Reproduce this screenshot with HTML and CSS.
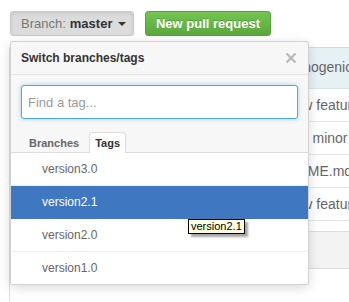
FILE: index.html
```html
<!DOCTYPE html>
<html lang="en">

<head>
    <meta charset="UTF-8">
    <meta name="viewport" content="width=device-width, initial-scale=1.0">
    <title>Switch branches/tags</title>
    <link rel="stylesheet" href="styles.css">
</head>

<body>
    <div class="page">
        <!-- Toolbar -->
        <div class="toolbar">
            <button class="btn btn-branch">
                <span class="btn-label">Branch:</span>
                <span class="btn-name">master</span>
                <span class="caret"></span>
            </button>
            <button class="btn btn-green">New pull request</button>
        </div>

        <!-- Commit list behind the menu -->
        <div class="commits">
            <div class="commit commit-head"><span class="msg">Hide pathogenic filter</span></div>
            <div class="commit"><span class="msg">Adds new feature list</span></div>
            <div class="commit"><span class="msg">Fixed <a href="#">#2</a>, minor cleanup</span></div>
            <div class="commit"><span class="msg">fix README.md</span></div>
            <div class="commit"><span class="msg">Adds new feature list</span></div>
            <div class="commit-foot"></div>
        </div>

        <!-- Branch / tag menu -->
        <div class="select-menu">
            <div class="menu-header">
                <span class="menu-title">Switch branches/tags</span>
                <svg class="menu-close" width="12" height="12" viewBox="0 0 12 12">
                    <path d="M1.5 1.5 L10.5 10.5 M10.5 1.5 L1.5 10.5" stroke="#b8b8b8" stroke-width="2.2" />
                </svg>
            </div>
            <div class="menu-filter">
                <input type="text" class="filter-input" placeholder="Find a tag...">
                <div class="menu-tabs">
                    <div class="menu-tab">Branches</div>
                    <div class="menu-tab active">Tags</div>
                </div>
            </div>
            <div class="menu-list">
                <div class="menu-item">version3.0</div>
                <div class="menu-item selected">version2.1</div>
                <div class="menu-item">version2.0</div>
                <div class="menu-item">version1.0</div>
            </div>
        </div>

        <div class="tooltip">version2.1</div>
    </div>
</body>

</html>
```

FILE: styles.css
```css
body {
    font-family: "Liberation Sans", Arial, sans-serif;
    margin: 0;
    padding: 0;
    background-color: white;
    color: #333;
    overflow: hidden;
}

.page {
    position: relative;
    padding: 11px 0 0 10px;
    height: 291px;
}

.toolbar {
    display: flex;
    gap: 11px;
}

.btn {
    height: 25px;
    padding: 0 10px;
    border-radius: 3px;
    font-family: inherit;
    font-size: 13px;
    line-height: 23px;
    white-space: nowrap;
    cursor: pointer;
}

.btn-branch {
    width: 124px;
    display: flex;
    align-items: center;
    gap: 4px;
    background-color: #dcdcdc;
    border: 1px solid #c8c8c8;
    box-shadow: inset 0 2px 4px rgba(0, 0, 0, 0.08);
}

.btn-label {
    color: #777;
}

.btn-name {
    font-weight: bold;
    color: #333;
}

.caret {
    width: 0;
    height: 0;
    margin-left: 2px;
    border-top: 4px solid #333;
    border-left: 4px solid transparent;
    border-right: 4px solid transparent;
}

.btn-green {
    width: 126px;
    padding: 0;
    text-align: center;
    color: white;
    font-weight: bold;
    text-shadow: 0 -1px 0 rgba(0, 0, 0, 0.2);
    background: linear-gradient(#74c551, #5aa83c);
    border: 1px solid #56a53a;
}

.commits {
    margin: 11px 0 0 -1px;
    border-left: 1px solid #ddd;
    height: 255px;
}

.commit {
    height: 32px;
    padding-left: 241px;
    border-bottom: 1px solid #e5e5e5;
    font-size: 14px;
    line-height: 32px;
    color: #666;
    white-space: nowrap;
    overflow: hidden;
}

.commit a {
    color: #4078c0;
    text-decoration: none;
}

.commit-head {
    height: 40px;
    line-height: 38px;
    background-color: #e6f1f6;
    border-top: 1px solid #c9dbe4;
    border-bottom: 1px solid #d8e3ea;
}

.commit-foot {
    margin-top: 10px;
    height: 36px;
    background-color: #f3f3f3;
    border-top: 1px solid #ddd;
    border-bottom: 1px solid #ddd;
}

.select-menu {
    position: absolute;
    top: 41px;
    left: 10px;
    width: 297px;
    background: #f7f7f7;
    border: 1px solid rgba(0, 0, 0, 0.15);
    border-radius: 3px;
    box-shadow: 0 3px 12px rgba(0, 0, 0, 0.15);
    overflow: hidden;
}

.menu-header {
    display: flex;
    justify-content: space-between;
    align-items: center;
    padding: 8px 10px;
    border-bottom: 1px solid #e5e5e5;
}

.menu-title {
    font-size: 12px;
    font-weight: bold;
    line-height: 16px;
    color: #333;
}

.menu-close {
    margin-right: 1px;
}

.menu-filter {
    padding: 10px 10px 0;
}

.filter-input {
    display: block;
    width: 100%;
    height: 34px;
    box-sizing: border-box;
    padding: 0 6px;
    font-family: inherit;
    font-size: 13px;
    background: white;
    border: 1px solid #51a7e8;
    border-radius: 3px;
    box-shadow: 0 0 4px rgba(81, 167, 232, 0.5);
    outline: none;
}

.filter-input::placeholder {
    color: #999;
}

.menu-tabs {
    display: flex;
    gap: 4px;
    margin: 13px -10px 0;
    padding-left: 12px;
    border-bottom: 1px solid #ddd;
}

.menu-tab {
    padding: 3px 5px 2px;
    font-size: 11px;
    font-weight: bold;
    line-height: 14px;
    color: #666;
    border: 1px solid transparent;
    border-bottom: none;
    border-radius: 3px 3px 0 0;
    margin-bottom: -1px;
}

.menu-tab.active {
    color: #333;
    background: white;
    border-color: #ddd;
    padding-bottom: 3px;
}

.menu-list {
    background: white;
}

.menu-item {
    height: 32px;
    padding-left: 31px;
    font-size: 12px;
    line-height: 32px;
    color: #666;
    border-bottom: 1px solid #eee;
}

.menu-item:last-child {
    border-bottom: none;
}

.menu-item.selected {
    color: white;
    background-color: #3f77c0;
    border-bottom-color: #3f77c0;
}

.tooltip {
    position: absolute;
    top: 219px;
    left: 188px;
    padding: 0 2px;
    font-size: 11px;
    line-height: 13px;
    color: black;
    background: #ffffe1;
    border: 1px solid black;
    box-shadow: 3px 3px 2px rgba(0, 0, 0, 0.35);
}
```
